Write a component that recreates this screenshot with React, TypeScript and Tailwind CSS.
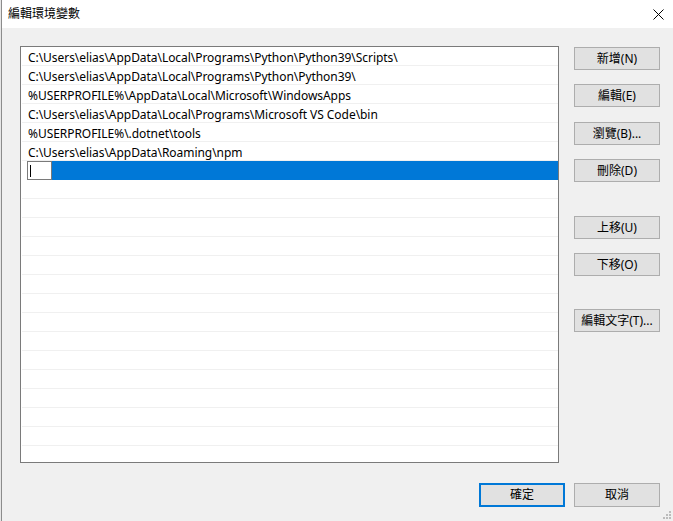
import React from 'react';

const PATHS = [
  'C:\\Users\\elias\\AppData\\Local\\Programs\\Python\\Python39\\Scripts\\',
  'C:\\Users\\elias\\AppData\\Local\\Programs\\Python\\Python39\\',
  '%USERPROFILE%\\AppData\\Local\\Microsoft\\WindowsApps',
  'C:\\Users\\elias\\AppData\\Local\\Programs\\Microsoft VS Code\\bin',
  '%USERPROFILE%\\.dotnet\\tools',
  'C:\\Users\\elias\\AppData\\Roaming\\npm',
];

const EMPTY_ROWS = 14;

const SIDE_BUTTONS: { label: string; mt: string }[] = [
  { label: '新增(N)', mt: 'mt-[1px]' },
  { label: '編輯(E)', mt: 'mt-[14px]' },
  { label: '瀏覽(B)...', mt: 'mt-[15px]' },
  { label: '刪除(D)', mt: 'mt-[14px]' },
  { label: '上移(U)', mt: 'mt-[34px]' },
  { label: '下移(O)', mt: 'mt-[14px]' },
  { label: '編輯文字(T)...', mt: 'mt-[33px]' },
];

function WinButton({ label, className = '' }: { label: string; className?: string }) {
  return (
    <button
      type="button"
      className={`flex h-[23px] w-[86px] items-center justify-center border border-[#adadad] bg-[#e1e1e1] text-[12px] text-black ${className}`}
    >
      {label}
    </button>
  );
}

function SizeGrip() {
  return (
    <svg width="10" height="10" viewBox="0 0 10 10" className="absolute bottom-[2px] right-[2px]">
      {[
        [8, 0],
        [8, 3],
        [5, 3],
        [8, 6],
        [5, 6],
        [2, 6],
      ].map(([x, y], i) => (
        <rect key={i} x={x} y={y + 2} width="2" height="2" fill="#bcbcbc" />
      ))}
    </svg>
  );
}

export default function App() {
  return (
    <div className="flex h-[521px] w-[673px] overflow-hidden font-['Segoe_UI','Noto_Sans','Noto_Sans_CJK_TC',sans-serif] text-[12px] text-black">
      {/* window behind / frame edge */}
      <div className="w-[1px] bg-[#e6e6e6]" />
      <div className="w-[1px] bg-[#8c8c8c]" />

      <div className="relative flex flex-1 flex-col bg-[#f0f0f0]">
        {/* title bar */}
        <div className="flex h-[28px] items-center justify-between bg-white pl-[6px] pr-[9px]">
          <span className="leading-none">編輯環境變數</span>
          <svg width="11" height="11" viewBox="0 0 11 11">
            <path d="M0.5 0.5 L10.5 10.5 M10.5 0.5 L0.5 10.5" stroke="#000" strokeWidth="1" />
          </svg>
        </div>

        <div className="flex pl-[18px] pt-[18px]">
          {/* list */}
          <div className="h-[417px] w-[539px] overflow-hidden border border-[#7a7a7a] bg-white">
            <div className="ml-[1px]">
              {PATHS.map((p) => (
                <div
                  key={p}
                  className="flex h-[19px] items-center overflow-hidden whitespace-nowrap border-b border-[#f0f0f0] pl-[6px] pt-[4px] text-[12px] leading-none tracking-[-0.05px]"
                >
                  {p}
                </div>
              ))}
              <div className="flex h-[19px]">
                <div className="w-[5px] bg-white" />
                <div className="flex h-[19px] w-[25px] items-center border border-[#7a7a7a] bg-white pl-[2px]">
                  <div className="h-[12px] w-[1px] bg-black" />
                </div>
                <div className="flex-1 bg-[#0078d7]" />
              </div>
              {Array.from({ length: EMPTY_ROWS }).map((_, i) => (
                <div key={i} className="h-[19px] border-b border-[#f0f0f0]" />
              ))}
            </div>
          </div>

          {/* side buttons */}
          <div className="ml-[15px] flex flex-col">
            {SIDE_BUTTONS.map((b) => (
              <WinButton key={b.label} label={b.label} className={b.mt} />
            ))}
          </div>
        </div>

        {/* bottom buttons */}
        <div className="mt-[20px] flex justify-end gap-[9px] pr-[13px]">
          <button
            type="button"
            className="flex h-[24px] w-[86px] items-center justify-center border-2 border-[#0078d7] bg-[#e1e1e1] text-[12px]"
          >
            確定
          </button>
          <WinButton label="取消" className="h-[24px]" />
        </div>

        <SizeGrip />
      </div>
    </div>
  );
}
